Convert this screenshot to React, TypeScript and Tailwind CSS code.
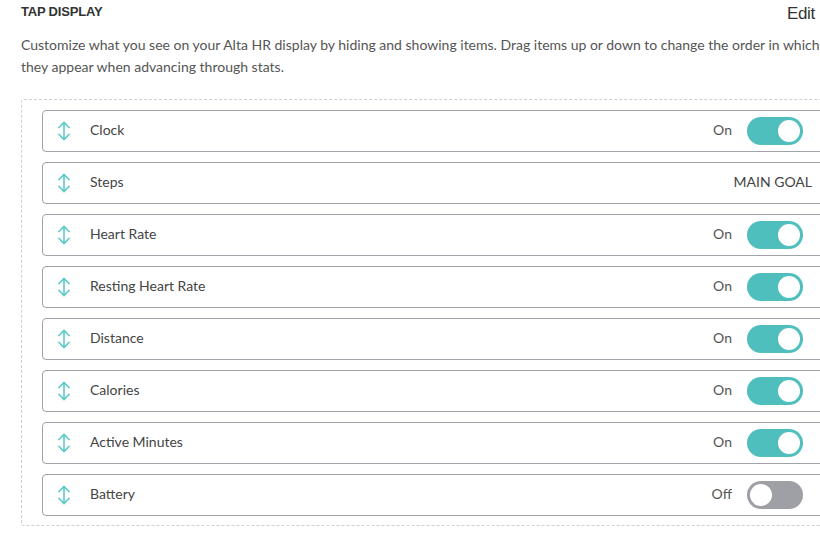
import React from "react";

type Item = { label: string; state: "on" | "off" | "goal" };

const items: Item[] = [
  { label: "Clock", state: "on" },
  { label: "Steps", state: "goal" },
  { label: "Heart Rate", state: "on" },
  { label: "Resting Heart Rate", state: "on" },
  { label: "Distance", state: "on" },
  { label: "Calories", state: "on" },
  { label: "Active Minutes", state: "on" },
  { label: "Battery", state: "off" },
];

const DragIcon = () => (
  <svg width="14" height="20" viewBox="0 0 14 20" fill="none" className="shrink-0">
    <path
      d="M7 1.5V18.5M1.5 7L7 1.5L12.5 7M1.5 13L7 18.5L12.5 13"
      stroke="#5ccaca"
      strokeWidth="1.6"
    />
  </svg>
);

const Toggle = ({ on }: { on: boolean }) => (
  <div
    className={`w-[56px] h-[28px] rounded-full flex items-center px-[3px] ${
      on ? "bg-[#4fbfbd] justify-end" : "bg-[#9fa0a6] justify-start"
    }`}
  >
    <div className="w-[22px] h-[22px] rounded-full bg-white" />
  </div>
);

export default function App() {
  return (
    <div className="w-[820px] h-[541px] overflow-hidden bg-white">
      <div className="w-[860px] pl-[21px] font-['Lato',sans-serif] text-[#333]">
        <div className="w-[794px] flex items-start justify-between pt-[4px] h-[30px]">
          <h2 className="font-['Liberation_Sans',Arial,sans-serif] text-[13px] font-semibold tracking-[-0.2px] leading-[16px] text-[#333]">
            TAP DISPLAY
          </h2>
          <span className="font-['Liberation_Sans',Arial,sans-serif] text-[17px] leading-[12px] mt-[4px] text-[#333] tracking-[-0.3px]">
            Edit
          </span>
        </div>
        <p className="w-[810px] whitespace-nowrap text-[14px] leading-[22px] text-[#555] mt-[4px]">
          Customize what you see on your Alta HR display by hiding and showing items. Drag items up or down to change the order in which
          <br />
          they appear when advancing through stats.
        </p>
        <div className="mt-[21px] w-[819px] border border-dashed border-[#cfcfcf] rounded-[3px] pl-[20px] pr-[9px] pt-[10px] pb-[9px] flex flex-col gap-[10px]">
          {items.map((item) => (
            <div
              key={item.label}
              className="h-[42px] border border-[#a2a2aa] rounded-[4px] flex items-center pl-[14px] pr-[17px]"
            >
              <DragIcon />
              <span className="ml-[19px] text-[14px] text-[#444] flex-1 pb-[3px]">{item.label}</span>
              {item.state === "goal" ? (
                <span className="text-[14px] text-[#444] uppercase pb-[3px]">Main Goal</span>
              ) : (
                <div className="flex items-center gap-[15px] mr-[9px]">
                  <span className="text-[14px] text-[#555] pb-[3px]">{item.state === "on" ? "On" : "Off"}</span>
                  <Toggle on={item.state === "on"} />
                </div>
              )}
            </div>
          ))}
        </div>
      </div>
    </div>
  );
}
